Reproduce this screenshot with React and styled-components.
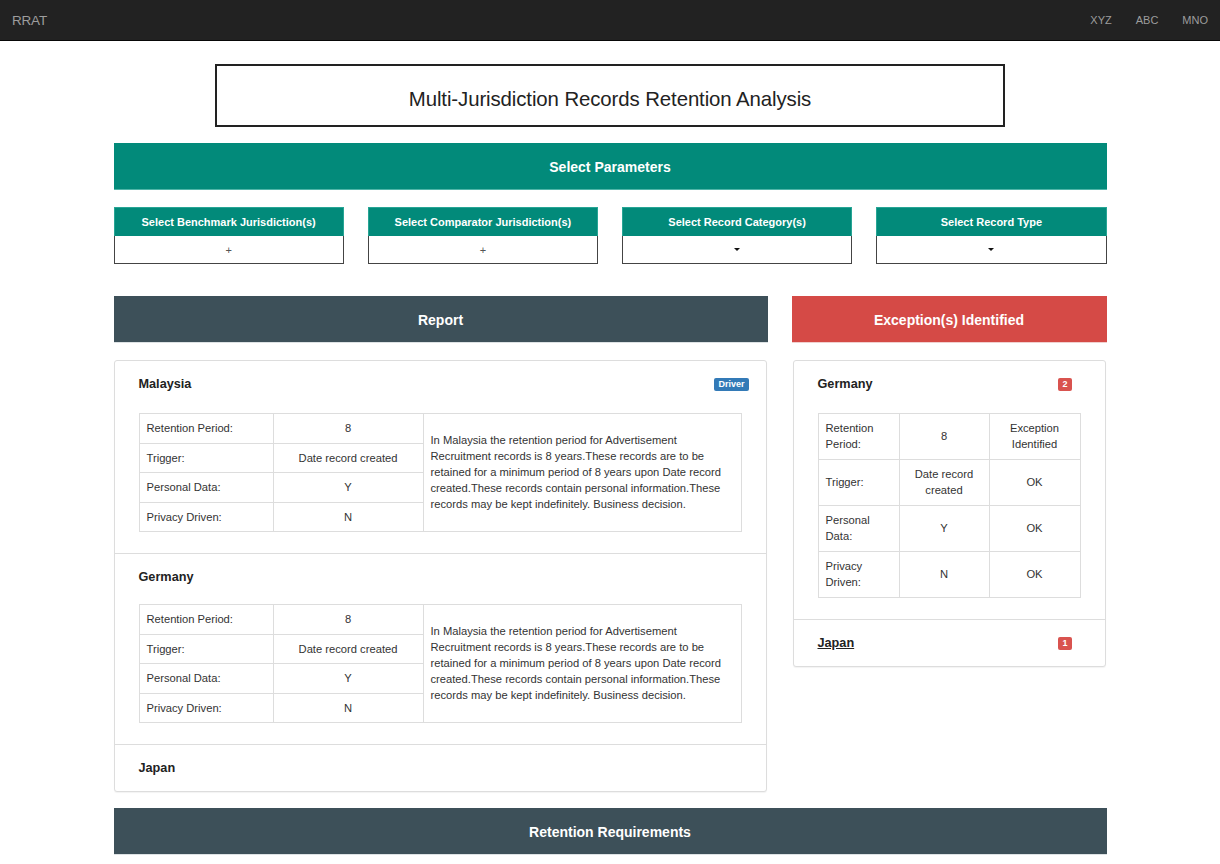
import React from "react";
import styled, { createGlobalStyle } from "styled-components";

const GlobalStyle = createGlobalStyle`
  * { box-sizing: border-box; }
  html, body { margin: 0; padding: 0; background: #fff; }
  body {
    font-family: "Liberation Sans", Arial, Helvetica, sans-serif;
    color: #333;
  }
`;

const Navbar = styled.nav`
  height: 41px;
  background: #222;
  border-bottom: 1px solid #080808;
  display: flex;
  align-items: center;
  justify-content: space-between;
  padding: 0 12px 0 12px;
`;

const Brand = styled.div`
  font-size: 13.5px;
  color: #9d9d9d;
  letter-spacing: -0.2px;
`;

const NavLinks = styled.div`
  display: flex;
  gap: 24px;
`;

const NavLink = styled.a`
  font-size: 11px;
  color: #9d9d9d;
  text-decoration: none;
`;

const Container = styled.main`
  width: 993px;
  margin: 0 auto;
  padding-top: 23px;
`;

const TitleBox = styled.div`
  width: 790px;
  height: 63px;
  margin: 0 auto 16px;
  border: 2px solid #222;
  display: flex;
  align-items: center;
  justify-content: center;
`;

const Title = styled.h1`
  margin: 0;
  font-size: 20.4px;
  font-weight: 400;
  color: #222;
  padding-top: 8px;
  letter-spacing: -0.1px;
`;

const Bar = styled.div`
  height: 47px;
  padding-top: 2px;
  background: ${(p) => p.$bg};
  border-bottom: 1px solid ${(p) => p.$edge || "rgba(255,255,255,0.25)"};
  color: #fff;
  font-weight: 700;
  font-size: 14px;
  display: flex;
  align-items: center;
  justify-content: center;
  margin-bottom: ${(p) => p.$mb || 0}px;
`;

const SelectGrid = styled.div`
  display: grid;
  grid-template-columns: repeat(4, 1fr);
  gap: 24px;
  margin-bottom: 32px;
`;

const SelectBox = styled.div`
  display: flex;
  flex-direction: column;
`;

const SelectHeader = styled.div`
  height: 29px;
  background: #028a7a;
  border: 1px solid #27a595;
  border-bottom: none;
  color: #fff;
  font-weight: 700;
  font-size: 11px;
  display: flex;
  align-items: center;
  justify-content: center;
`;

const SelectBody = styled.div`
  height: 28px;
  border: 1px solid #444;
  border-top: none;
  display: flex;
  align-items: center;
  justify-content: center;
  font-size: 11px;
  color: #555;
`;

const Caret = styled.span`
  display: inline-block;
  width: 0;
  height: 0;
  border-top: 3px solid #111;
  border-left: 3px solid transparent;
  border-right: 3px solid transparent;
`;

const MainRow = styled.div`
  display: grid;
  grid-template-columns: 654px 315px;
  gap: 24px;
  align-items: start;
  margin-bottom: 16px;
`;

const Column = styled.div`
  display: flex;
  flex-direction: column;
  gap: 17px;
`;

const Panel = styled.div`
  border: 1px solid #ddd;
  border-radius: 3px;
  box-shadow: 0 1px 1px rgba(0, 0, 0, 0.05);
  background: #fff;
  margin: ${(p) => (p.$inset ? "0 1px" : "0 1px 0 0")};
`;

const Section = styled.section`
  padding: 14px 24px 14px;
  & + & {
    border-top: 1px solid #ddd;
  }
`;

const HeadingRow = styled.div`
  height: 18px;
  display: flex;
  align-items: center;
  justify-content: space-between;
`;

const Heading = styled.h3`
  margin: 0;
  font-size: 12.7px;
  font-weight: 700;
  color: #222;
  text-decoration: ${(p) => (p.$underline ? "underline" : "none")};
`;

const Badge = styled.span`
  display: inline-block;
  background: ${(p) => (p.$variant === "danger" ? "#d9534f" : "#337ab7")};
  color: #fff;
  font-size: 9px;
  font-weight: 700;
  line-height: 1;
  padding: 2px 4px 2px;
  border-radius: 2px;
  margin-right: ${(p) => p.$shift || 0}px;
  margin-top: 1px;
`;

const Table = styled.table`
  width: 100%;
  border-collapse: collapse;
  table-layout: fixed;
  margin: ${(p) => p.$gap}px 0 7px;
  border: 1px solid #ddd;

  td {
    padding: ${(p) => p.$cellPad};
  }
`;

const Cell = styled.td`
  border: 1px solid #ddd;
  font-size: 11.2px;
  line-height: 16px;
  color: #333;
  vertical-align: middle;
  text-align: ${(p) => p.$align || "left"};
`;

const description =
  "In Malaysia the retention period for Advertisement Recruitment records is 8 years.These records are to be retained for a minimum period of 8 years upon Date record created.These records contain personal information.These records may be kept indefinitely. Business decision.";

const recordRows = [
  ["Retention Period:", "8"],
  ["Trigger:", "Date record created"],
  ["Personal Data:", "Y"],
  ["Privacy Driven:", "N"],
];

const reports = [
  { name: "Malaysia", badge: "Driver", rows: recordRows, description },
  { name: "Germany", rows: recordRows, description },
  { name: "Japan" },
];

const exceptions = [
  {
    name: "Germany",
    count: 2,
    rows: [
      ["Retention Period:", "8", "Exception Identified"],
      ["Trigger:", "Date record created", "OK"],
      ["Personal Data:", "Y", "OK"],
      ["Privacy Driven:", "N", "OK"],
    ],
  },
  { name: "Japan", count: 1, underline: true },
];

const selects = [
  { label: "Select Benchmark Jurisdiction(s)", kind: "plus" },
  { label: "Select Comparator Jurisdiction(s)", kind: "plus" },
  { label: "Select Record Category(s)", kind: "caret" },
  { label: "Select Record Type", kind: "caret" },
];

function ReportTable({ rows, description, gap }) {
  return (
    <Table $gap={gap} $cellPad="6px 7px 6.5px">
      <colgroup>
        <col style={{ width: 134 }} />
        <col style={{ width: 150 }} />
        <col />
      </colgroup>
      <tbody>
        {rows.map(([label, value], i) => (
          <tr key={label}>
            <Cell>{label}</Cell>
            <Cell $align="center">{value}</Cell>
            {i === 0 && <Cell rowSpan={rows.length}>{description}</Cell>}
          </tr>
        ))}
      </tbody>
    </Table>
  );
}

function ExceptionTable({ rows, gap }) {
  return (
    <Table $gap={gap} $cellPad="6px 7px 7px">
      <colgroup>
        <col style={{ width: 81 }} />
        <col style={{ width: 90 }} />
        <col />
      </colgroup>
      <tbody>
        {rows.map(([label, value, status]) => (
          <tr key={label}>
            <Cell>{label}</Cell>
            <Cell $align="center">{value}</Cell>
            <Cell $align="center">{status}</Cell>
          </tr>
        ))}
      </tbody>
    </Table>
  );
}

export default function App() {
  return (
    <>
      <GlobalStyle />
      <Navbar>
        <Brand>RRAT</Brand>
        <NavLinks>
          <NavLink>XYZ</NavLink>
          <NavLink>ABC</NavLink>
          <NavLink>MNO</NavLink>
        </NavLinks>
      </Navbar>
      <Container>
        <TitleBox>
          <Title>Multi-Jurisdiction Records Retention Analysis</Title>
        </TitleBox>
        <Bar $bg="#028a7a" $edge="#4fb5a8" $mb={17}>
          Select Parameters
        </Bar>
        <SelectGrid>
          {selects.map((s) => (
            <SelectBox key={s.label}>
              <SelectHeader>{s.label}</SelectHeader>
              <SelectBody>{s.kind === "plus" ? "+" : <Caret />}</SelectBody>
            </SelectBox>
          ))}
        </SelectGrid>
        <MainRow>
          <Column>
            <Bar $bg="#3d5059" $edge="#dde2e4">
              Report
            </Bar>
            <Panel>
              {reports.map((r) => (
                <Section key={r.name}>
                  <HeadingRow>
                    <Heading>{r.name}</Heading>
                    {r.badge && <Badge $shift={-7}>{r.badge}</Badge>}
                  </HeadingRow>
                  {r.rows && (
                    <ReportTable
                      rows={r.rows}
                      description={r.description}
                      gap={r.badge ? 20 : 18}
                    />
                  )}
                </Section>
              ))}
            </Panel>
          </Column>
          <Column>
            <Bar $bg="#d54a46" $edge="#f0d0cf">
              Exception(s) Identified
            </Bar>
            <Panel $inset>
              {exceptions.map((e) => (
                <Section key={e.name}>
                  <HeadingRow>
                    <Heading $underline={e.underline}>{e.name}</Heading>
                    <Badge $variant="danger" $shift={9}>
                      {e.count}
                    </Badge>
                  </HeadingRow>
                  {e.rows && <ExceptionTable rows={e.rows} gap={20} />}
                </Section>
              ))}
            </Panel>
          </Column>
        </MainRow>
        <Bar $bg="#3d5059" $edge="#dde2e4">
          Retention Requirements
        </Bar>
      </Container>
    </>
  );
}
